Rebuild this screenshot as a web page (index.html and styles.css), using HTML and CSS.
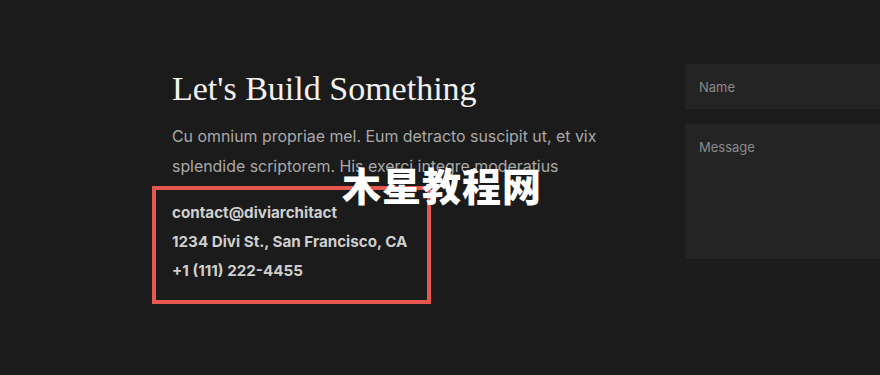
FILE: index.html
```html
<!DOCTYPE html>
<html>
<head>
	<title>Contact</title>
	<link rel="stylesheet" href="styles.css">
</head>
<body>
	<div class="section">
		<div class="info">
			<h1 class="title">Let's Build Something</h1>
			<p class="intro">Cu omnium propriae mel. Eum detracto suscipit ut, et vix splendide scriptorem. His exerci integre moderatius</p>
			<!-- highlighted contact details -->
			<div class="contact-box">
				<div class="contact-line">contact@diviarchitact</div>
				<div class="contact-line">1234 Divi St., San Francisco, CA</div>
				<div class="contact-line">+1 (111) 222-4455</div>
			</div>
		</div>
		<form class="contact-form">
			<input type="text" class="field" placeholder="Name">
			<textarea class="field field-msg" placeholder="Message"></textarea>
		</form>
	</div>
	<div class="watermark">木星教程网</div>
</body>
</html>
```

FILE: styles.css
```css
body {
	margin: 0;
	background-color: #1b1b1b;
	width: 880px;
	height: 375px;
	overflow: hidden;
	position: relative;
}
.section {
	display: flex;
	padding: 64px 0 0 172px;
	gap: 73px;
}
.info {
	width: 440px;
	flex-shrink: 0;
}
.title {
	font-family: "Liberation Serif", serif;
	font-weight: normal;
	font-size: 34px;
	line-height: 50px;
	color: #f2f2f2;
	margin: 0;
}
.intro {
	font-family: "Inter", sans-serif;
	font-size: 15.9px;
	line-height: 30px;
	color: #a9a9a9;
	margin: 8px 0 0 0;
}
.contact-box {
	margin: 4px 0 0 -20px;
	width: 255px;
	border: 4px solid #e8574f;
	padding: 8px 0 15px 16px;
}
.contact-line {
	font-family: "Inter", sans-serif;
	font-weight: bold;
	font-size: 15.2px;
	line-height: 29px;
	color: #cfcfcf;
}
.contact-form {
	display: flex;
	flex-direction: column;
	gap: 15px;
	width: 220px;
	flex-shrink: 0;
}
.field {
	display: block;
	border: none;
	background-color: #242424;
	height: 45px;
	padding: 0 14px;
	font-family: "Inter", sans-serif;
	font-size: 13px;
	color: #999;
	box-sizing: border-box;
	outline: none;
}
.field::placeholder {
	color: #8a8a8a;
}
.field-msg {
	height: 135px;
	padding-top: 15px;
	resize: none;
}
.watermark {
	position: absolute;
	left: 342px;
	top: 160px;
	font-family: "Noto Sans CJK SC", sans-serif;
	font-weight: 900;
	font-size: 39px;
	line-height: 48px;
	color: #ffffff;
	letter-spacing: 1px;
}
```
